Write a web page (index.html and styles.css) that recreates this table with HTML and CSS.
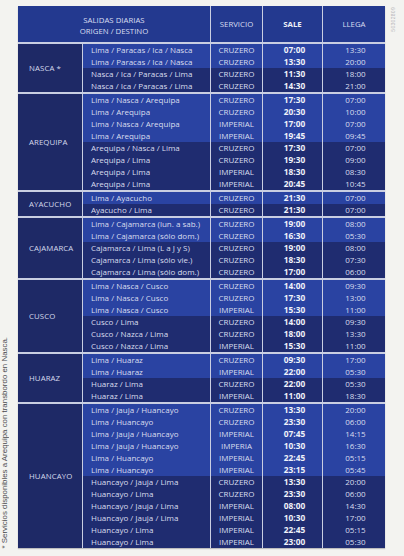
FILE: index.html
```html
<!DOCTYPE html>
<html lang="es">
<head>
<meta charset="utf-8">
<title>Salidas diarias</title>
<link rel="stylesheet" href="styles.css">
</head>
<body>
<div class="note"><span>* Servicios disponibles a Arequipa con transbordo en Nasca.</span></div>
<div class="sheet">
  <div class="head">
    <div class="h od">SALIDAS DIARIAS<br>ORIGEN / DESTINO</div>
    <div class="h">SERVICIO</div>
    <div class="h b">SALE</div>
    <div class="h">LLEGA</div>
  </div>

  <div class="grp">
    <div class="city">NASCA *</div>
    <div class="rows">
      <div class="r o"><span>Lima / Paracas / Ica / Nasca</span><span>CRUZERO</span><span>07:00</span><span>13:30</span></div>
      <div class="r o"><span>Lima / Paracas / Ica / Nasca</span><span>CRUZERO</span><span>13:30</span><span>20:00</span></div>
      <div class="r d"><span>Nasca / Ica / Paracas / Lima</span><span>CRUZERO</span><span>11:30</span><span>18:00</span></div>
      <div class="r d"><span>Nasca / Ica / Paracas / Lima</span><span>CRUZERO</span><span>14:30</span><span>21:00</span></div>
    </div>
  </div>

  <div class="grp">
    <div class="city">AREQUIPA</div>
    <div class="rows">
      <div class="r o"><span>Lima / Nasca / Arequipa</span><span>CRUZERO</span><span>17:30</span><span>07:00</span></div>
      <div class="r o"><span>Lima / Arequipa</span><span>CRUZERO</span><span>20:30</span><span>10:00</span></div>
      <div class="r o"><span>Lima / Nasca / Arequipa</span><span>IMPERIAL</span><span>17:00</span><span>07:00</span></div>
      <div class="r o"><span>Lima / Arequipa</span><span>IMPERIAL</span><span>19:45</span><span>09:45</span></div>
      <div class="r d"><span>Arequipa / Nasca / Lima</span><span>CRUZERO</span><span>17:30</span><span>07:00</span></div>
      <div class="r d"><span>Arequipa / Lima</span><span>CRUZERO</span><span>19:30</span><span>09:00</span></div>
      <div class="r d"><span>Arequipa / Lima</span><span>IMPERIAL</span><span>18:30</span><span>08:30</span></div>
      <div class="r d"><span>Arequipa / Lima</span><span>IMPERIAL</span><span>20:45</span><span>10:45</span></div>
    </div>
  </div>

  <div class="grp">
    <div class="city">AYACUCHO</div>
    <div class="rows">
      <div class="r o"><span>Lima / Ayacucho</span><span>CRUZERO</span><span>21:30</span><span>07:00</span></div>
      <div class="r d"><span>Ayacucho / Lima</span><span>CRUZERO</span><span>21:30</span><span>07:00</span></div>
    </div>
  </div>

  <div class="grp">
    <div class="city">CAJAMARCA</div>
    <div class="rows">
      <div class="r o"><span>Lima / Cajamarca (lun. a sab.)</span><span>CRUZERO</span><span>19:00</span><span>08:00</span></div>
      <div class="r o"><span>Lima / Cajamarca (sólo dom.)</span><span>CRUZERO</span><span>16:30</span><span>05:30</span></div>
      <div class="r d"><span>Cajamarca / Lima (L a J y S)</span><span>CRUZERO</span><span>19:00</span><span>08:00</span></div>
      <div class="r d"><span>Cajamarca / Lima (sólo vie.)</span><span>CRUZERO</span><span>18:30</span><span>07:30</span></div>
      <div class="r d"><span>Cajamarca / Lima (sólo dom.)</span><span>CRUZERO</span><span>17:00</span><span>06:00</span></div>
    </div>
  </div>

  <div class="grp">
    <div class="city">CUSCO</div>
    <div class="rows">
      <div class="r o"><span>Lima / Nasca / Cusco</span><span>CRUZERO</span><span>14:00</span><span>09:30</span></div>
      <div class="r o"><span>Lima / Nasca / Cusco</span><span>CRUZERO</span><span>17:30</span><span>13:00</span></div>
      <div class="r o"><span>Lima / Nasca / Cusco</span><span>IMPERIAL</span><span>15:30</span><span>11:00</span></div>
      <div class="r d"><span>Cusco / Lima</span><span>CRUZERO</span><span>14:00</span><span>09:30</span></div>
      <div class="r d"><span>Cusco / Nazca / Lima</span><span>CRUZERO</span><span>18:00</span><span>13:30</span></div>
      <div class="r d"><span>Cusco / Nazca / Lima</span><span>IMPERIAL</span><span>15:30</span><span>11:00</span></div>
    </div>
  </div>

  <div class="grp">
    <div class="city">HUARAZ</div>
    <div class="rows">
      <div class="r o"><span>Lima / Huaraz</span><span>CRUZERO</span><span>09:30</span><span>17:00</span></div>
      <div class="r o"><span>Lima / Huaraz</span><span>IMPERIAL</span><span>22:00</span><span>05:30</span></div>
      <div class="r d"><span>Huaraz / Lima</span><span>CRUZERO</span><span>22:00</span><span>05:30</span></div>
      <div class="r d"><span>Huaraz / Lima</span><span>IMPERIAL</span><span>11:00</span><span>18:30</span></div>
    </div>
  </div>

  <div class="grp">
    <div class="city">HUANCAYO</div>
    <div class="rows">
      <div class="r o"><span>Lima / Jauja / Huancayo</span><span>CRUZERO</span><span>13:30</span><span>20:00</span></div>
      <div class="r o"><span>Lima / Huancayo</span><span>CRUZERO</span><span>23:30</span><span>06:00</span></div>
      <div class="r o"><span>Lima / Jauja / Huancayo</span><span>IMPERIAL</span><span>07:45</span><span>14:15</span></div>
      <div class="r o"><span>Lima / Jauja / Huancayo</span><span>IMPERIA</span><span>10:30</span><span>16:30</span></div>
      <div class="r o"><span>Lima / Huancayo</span><span>IMPERIAL</span><span>22:45</span><span>05:15</span></div>
      <div class="r o"><span>Lima / Huancayo</span><span>IMPERIAL</span><span>23:15</span><span>05:45</span></div>
      <div class="r d"><span>Huancayo / Jauja / Lima</span><span>CRUZERO</span><span>13:30</span><span>20:00</span></div>
      <div class="r d"><span>Huancayo / Lima</span><span>CRUZERO</span><span>23:30</span><span>06:00</span></div>
      <div class="r d"><span>Huancayo / Jauja / Lima</span><span>IMPERIAL</span><span>08:00</span><span>14:30</span></div>
      <div class="r d"><span>Huancayo / Jauja / Lima</span><span>IMPERIAL</span><span>10:30</span><span>17:00</span></div>
      <div class="r d"><span>Huancayo / Lima</span><span>IMPERIAL</span><span>22:45</span><span>05:15</span></div>
      <div class="r d"><span>Huancayo / Lima</span><span>IMPERIAL</span><span>23:00</span><span>05:30</span></div>
    </div>
  </div>
</div>
<div class="code"><span>50302809</span></div>
</body>
</html>
```

FILE: styles.css
```css
html, body {
  margin: 0;
  padding: 0;
}

body {
  width: 404px;
  height: 556px;
  background: #f3f3f0;
  display: flex;
  align-items: flex-start;
  font-family: "Open Sans", "Noto Sans", sans-serif;
  overflow: hidden;
}

.note {
  width: 18px;
  height: 556px;
  display: flex;
  align-items: flex-end;
  justify-content: flex-start;
  box-sizing: border-box;
  padding-bottom: 8px;
}

.note span {
  writing-mode: vertical-rl;
  transform: rotate(180deg);
  font-family: "Liberation Sans", Arial, sans-serif;
  font-size: 7.9px;
  line-height: 10px;
  color: #4a4a4e;
  white-space: nowrap;
}

.sheet {
  width: 367px;
  margin-top: 6px;
  display: flex;
  flex-direction: column;
  gap: 2px;
  background: #c9cee2;
  box-shadow: 0 1px 1px rgba(90, 90, 100, 0.35);
}

.head {
  display: grid;
  grid-template-columns: 192px 51px 59px 62px;
  column-gap: 1px;
  height: 36px;
}

.h {
  background: #23398f;
  color: #d9def0;
  font-size: 7.8px;
  display: flex;
  align-items: center;
  justify-content: center;
  text-align: center;
  line-height: 11px;
}

.h.od {
  padding-top: 4px;
  box-sizing: border-box;
}

.h.b {
  font-weight: 700;
  color: #eef0f8;
}

.grp {
  display: grid;
  grid-template-columns: 64px 302px;
  column-gap: 1px;
}

.city {
  background: #1e2966;
  color: #d5daec;
  font-size: 7.8px;
  display: flex;
  align-items: center;
  padding-left: 11px;
  letter-spacing: 0.1px;
}

.rows {
  display: flex;
  flex-direction: column;
}

.r {
  display: grid;
  grid-template-columns: 127px 51px 59px 62px;
  column-gap: 1px;
  height: 12px;
  font-size: 8px;
  line-height: 12px;
  color: #d9ddee;
}

.r span {
  text-align: center;
  white-space: nowrap;
  overflow: hidden;
}

.r span:first-child {
  text-align: left;
  padding-left: 8px;
}

.r span:nth-child(3) {
  font-weight: 700;
  font-size: 8.3px;
  color: #f0f2fa;
  padding-left: 4px;
}

.r span:nth-child(4) {
  padding-left: 3px;
}

.o span {
  background: #2a43a2;
}

.d span {
  background: #1f2c70;
}

.code {
  width: 19px;
  padding-top: 7px;
  padding-left: 5px;
  box-sizing: border-box;
}

.code span {
  writing-mode: vertical-rl;
  transform: rotate(180deg);
  font-family: "Liberation Sans", Arial, sans-serif;
  font-size: 5px;
  line-height: 6px;
  color: #b4b4b8;
  letter-spacing: 0.3px;
  display: inline-block;
}
```
